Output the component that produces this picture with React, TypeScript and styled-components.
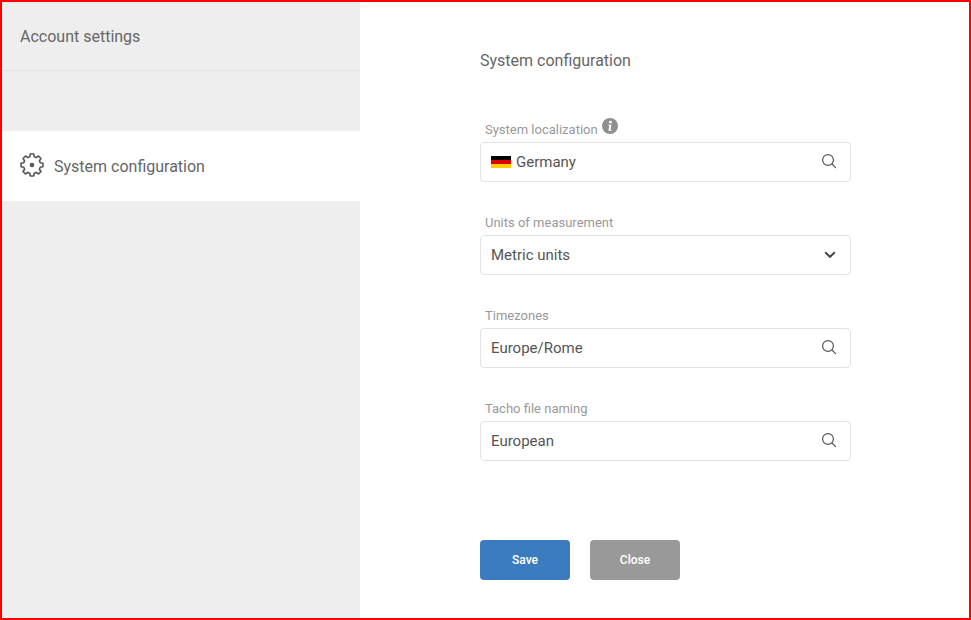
import React from "react";
import styled, {createGlobalStyle} from "styled-components";

const GlobalStyle = createGlobalStyle`
  html, body {
    margin: 0;
    padding: 0;
    background: #fff;
    font-family: Roboto, "Liberation Sans", sans-serif;
  }
`;

// eight toothed outline, easier to tune than a hand written path
const gearPath = Array.from({length: 8}, (_, i) => {
    const center = (i * Math.PI) / 4 - Math.PI / 2;
    const point = (radius: number, offset: number) =>
        `${(12 + radius * Math.cos(center + offset)).toFixed(2)} ${(12 + radius * Math.sin(center + offset)).toFixed(2)}`;
    return `${i === 0 ? "M" : "L"}${point(8.5, -0.27)} L${point(11.1, -0.16)} L${point(11.1, 0.16)} L${point(8.5, 0.27)}`;
}).join(" ") + " Z";

const GearIcon = () => (
    <svg width="24" height="24" viewBox="0 0 24 24" fill="none" stroke="#555" strokeWidth="1.6" strokeLinejoin="round">
        <path d={gearPath}/>
        <circle cx="12" cy="12" r="2.3" fill="#555" stroke="none"/>
    </svg>
);

const SearchIcon = () => (
    <SearchSvg width="16" height="16" viewBox="0 0 16 16" fill="none" stroke="#555" strokeWidth="1.2" strokeLinecap="round">
        <circle cx="7" cy="7" r="5.4"/>
        <path d="M11 11l3.6 3.6"/>
    </SearchSvg>
);

const ChevronIcon = () => (
    <svg width="12" height="8" viewBox="0 0 12 8" fill="none" stroke="#444" strokeWidth="2">
        <path d="M1.2 1.2L6 5.8l4.8-4.6"/>
    </svg>
);

const InfoIcon = () => (
    <svg width="16" height="16" viewBox="0 0 16 16">
        <circle cx="8" cy="8" r="8" fill="#8f8f8f"/>
        <circle cx="8.4" cy="4.2" r="1.4" fill="#fff"/>
        <path d="M6.4 6.8h3l-.9 5h1v1H6.4l.9-5h-.9z" fill="#fff"/>
    </svg>
);

const Field: React.FC<React.PropsWithChildren<{label: string; info?: boolean; icon: React.ReactNode}>> = ({
    label,
    info,
    icon,
    children,
}) => (
    <FieldWrapper>
        <LabelRow>
            <Label>{label}</Label>
            {info && <InfoIcon/>}
        </LabelRow>
        <InputBox>
            <Value>{children}</Value>
            {icon}
        </InputBox>
    </FieldWrapper>
);

export default function App() {
    return (
        <Frame>
            <GlobalStyle/>
            <Sidebar>
                <SidebarHeader>Account settings</SidebarHeader>
                <ActiveItem>
                    <GearIcon/>
                    System configuration
                </ActiveItem>
            </Sidebar>
            <Main>
                <Title>System configuration</Title>
                <Fields>
                    <Field label="System localization" info icon={<SearchIcon/>}>
                        <Flag/>
                        Germany
                    </Field>
                    <Field label="Units of measurement" icon={<ChevronIcon/>}>Metric units</Field>
                    <Field label="Timezones" icon={<SearchIcon/>}>Europe/Rome</Field>
                    <Field label="Tacho file naming" icon={<SearchIcon/>}>European</Field>
                </Fields>
                <Buttons>
                    <Button>Save</Button>
                    <Button $secondary>Close</Button>
                </Buttons>
            </Main>
        </Frame>
    );
}

const Frame = styled.div`
  box-sizing: border-box;
  width: 971px;
  height: 620px;
  border: 2px solid #f00;
  display: flex;
  overflow: hidden;
  background: #fff;
`;

const Sidebar = styled.aside`
  width: 358px;
  background: #eee;
  display: flex;
  flex-direction: column;
`;

const SidebarHeader = styled.div`
  height: 69px;
  box-sizing: border-box;
  padding-left: 18px;
  display: flex;
  align-items: center;
  font-size: 16px;
  color: #666;
  border-bottom: 1px solid #e3e3e3;
`;

const ActiveItem = styled.div`
  margin-top: 60px;
  height: 70px;
  background: #fff;
  box-sizing: border-box;
  padding: 1px 0 0 18px;
  display: flex;
  align-items: center;
  gap: 10px;
  font-size: 16px;
  color: #666;

  svg {
    margin-bottom: 3px;
  }
`;

const Main = styled.main`
  flex: 1;
  padding: 50px 0 0 120px;
`;

const Title = styled.h1`
  margin: 0;
  font-size: 16px;
  font-weight: 400;
  line-height: 18px;
  color: #666;
`;

const Fields = styled.div`
  margin-top: 39px;
  display: flex;
  flex-direction: column;
  gap: 20px;
`;

const FieldWrapper = styled.div`
  width: 371px;
`;

const LabelRow = styled.div`
  height: 33px;
  box-sizing: border-box;
  padding: 0 0 4px 5px;
  display: flex;
  align-items: flex-end;
  gap: 4px;

  svg {
    margin-bottom: 4px;
  }
`;

const Label = styled.label`
  font-size: 13px;
  line-height: 16px;
  color: #999;
`;

const InputBox = styled.div`
  height: 40px;
  box-sizing: border-box;
  border: 1px solid #e2e2e2;
  border-radius: 4px;
  padding: 0 14px 0 10px;
  display: flex;
  align-items: center;
  justify-content: space-between;
`;

const SearchSvg = styled.svg`
  margin: 0 -1px 2px 0;
`;

const Value = styled.div`
  display: flex;
  align-items: center;
  gap: 5px;
  font-size: 15px;
  color: #555;
`;

const Flag = styled.span`
  width: 20px;
  height: 12px;
  background: linear-gradient(#000 0 33.3%, #d00 33.3% 66.6%, #ffce00 66.6%);
`;

const Buttons = styled.div`
  margin-top: 79px;
  display: flex;
  gap: 20px;
`;

const Button = styled.button<{$secondary?: boolean}>`
  width: 90px;
  height: 40px;
  border: none;
  border-radius: 4px;
  background: ${p => (p.$secondary ? "#999" : "#3b7cc0")};
  color: #fff;
  font-family: inherit;
  font-size: 12px;
  font-weight: 500;
`;
